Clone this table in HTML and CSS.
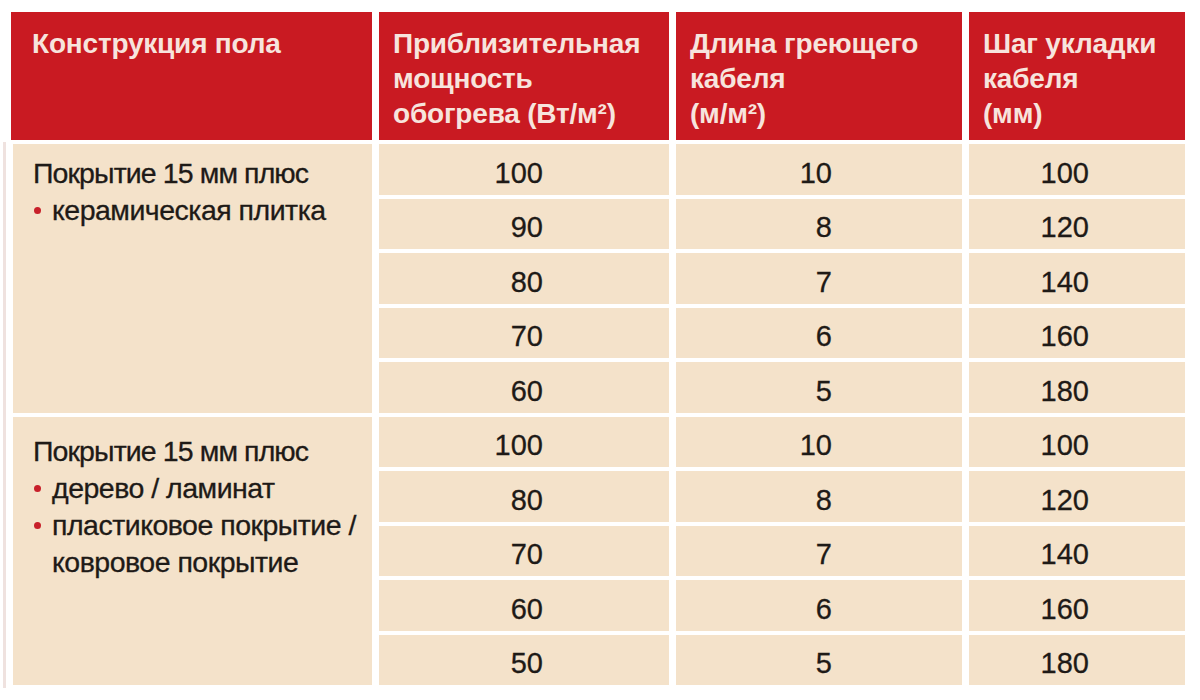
FILE: index.html
```html
<!DOCTYPE html>
<html lang="ru">
<head>
<meta charset="utf-8">
<title>Таблица</title>
<link rel="stylesheet" href="styles.css">
</head>
<body>
<div class="page">
  <div class="table">
    <div class="th th-first">Конструкция пола</div>
    <div class="th">Приблизительная<br>мощность<br>обогрева (Вт/м²)</div>
    <div class="th">Длина греющего<br>кабеля<br>(м/м²)</div>
    <div class="th">Шаг укладки<br>кабеля<br>(мм)</div>

    <div class="group group-1">
      <div class="group-title">Покрытие 15 мм плюс</div>
      <ul class="bullets">
        <li>керамическая плитка</li>
      </ul>
    </div>
    <div class="td c2">100</div><div class="td c3">10</div><div class="td c4">100</div>
    <div class="td c2">90</div><div class="td c3">8</div><div class="td c4">120</div>
    <div class="td c2">80</div><div class="td c3">7</div><div class="td c4">140</div>
    <div class="td c2">70</div><div class="td c3">6</div><div class="td c4">160</div>
    <div class="td c2">60</div><div class="td c3">5</div><div class="td c4">180</div>

    <div class="group group-2">
      <div class="group-title">Покрытие 15 мм плюс</div>
      <ul class="bullets">
        <li>дерево / ламинат</li>
        <li>пластиковое покрытие /<br>ковровое покрытие</li>
      </ul>
    </div>
    <div class="td c2">100</div><div class="td c3">10</div><div class="td c4">100</div>
    <div class="td c2">80</div><div class="td c3">8</div><div class="td c4">120</div>
    <div class="td c2">70</div><div class="td c3">7</div><div class="td c4">140</div>
    <div class="td c2">60</div><div class="td c3">6</div><div class="td c4">160</div>
    <div class="td c2">50</div><div class="td c3">5</div><div class="td c4">180</div>
  </div>
</div>
</body>
</html>
```

FILE: styles.css
```css
html, body {
  margin: 0;
  padding: 0;
  background: #ffffff;
}

body {
  width: 1200px;
  height: 700px;
  overflow: hidden;
  font-family: "Liberation Sans", Arial, sans-serif;
}

.page {
  padding: 12px 0 0 11px;
  position: relative;
}

.page::before {
  content: "";
  position: absolute;
  left: 3px;
  top: 142px;
  width: 3px;
  height: 546px;
  background: #efe2df;
}

.table {
  display: grid;
  grid-template-columns: 361px 290px 286px 216px;
  grid-template-rows: 128px repeat(10, 50.5px);
  column-gap: 7px;
  row-gap: 4px;
}

.th {
  background: #c91a22;
  color: #f7e4dd;
  font-weight: bold;
  font-size: 28px;
  line-height: 35px;
  padding: 14px 10px 0 14px;
  letter-spacing: -0.2px;
  white-space: nowrap;
}

.th-first {
  padding-left: 21px;
}

.td {
  background: #f4e2ca;
  color: #1e1a17;
  font-size: 29px;
  display: flex;
  align-items: center;
  justify-content: flex-end;
  padding-top: 8px;
  -webkit-text-stroke: 0.3px #1e1a17;
}

.c2 { padding-right: 126px; }
.c3 { padding-right: 130px; }
.c4 { padding-right: 96px; }

.group {
  grid-column: 1;
  grid-row: span 5;
  background: #f4e2ca;
  color: #1e1a17;
  font-size: 28.5px;
  line-height: 37px;
  padding: 11px 6px 0 20px;
  margin-left: 2px;
  -webkit-text-stroke: 0.3px #1e1a17;
  letter-spacing: -0.5px;
  white-space: nowrap;
}

.group-2 {
  padding-top: 16px;
}

.group-title {
  margin: 0;
  letter-spacing: -0.9px;
}

.bullets {
  list-style: none;
  margin: 0;
  padding: 0 0 0 19px;
}

.bullets li {
  position: relative;
}

.bullets li::before {
  content: "";
  position: absolute;
  left: -18px;
  top: 15px;
  width: 7px;
  height: 7px;
  border-radius: 50%;
  background: #c8202a;
}
```
